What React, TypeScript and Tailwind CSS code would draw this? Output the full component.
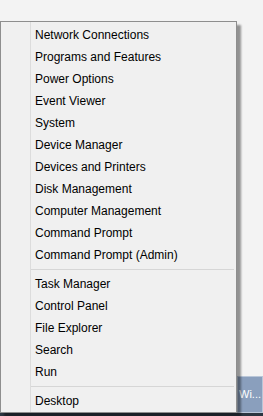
import React from 'react';

const GROUPS: string[][] = [
  [
    'Network Connections',
    'Programs and Features',
    'Power Options',
    'Event Viewer',
    'System',
    'Device Manager',
    'Devices and Printers',
    'Disk Management',
    'Computer Management',
    'Command Prompt',
    'Command Prompt (Admin)',
  ],
  ['Task Manager', 'Control Panel', 'File Explorer', 'Search', 'Run'],
  ['Desktop'],
];

export default function App() {
  return (
    <div className="relative w-[263px] h-[416px] overflow-hidden bg-[#f3f3f3] pt-[21px] font-['Segoe_UI','Liberation_Sans',sans-serif] text-[12px] text-black">
      {/* taskbar edge + window button peeking out under the menu */}
      <div className="absolute left-0 right-0 bottom-0 h-[3px] bg-[#2b3540]" />
      <div className="absolute left-[237px] top-[376px] w-[26px] h-[37px] border border-[#b9c6d8] bg-[#8a9fbd] pl-[1px] pt-[12px] text-[11px] leading-none text-white whitespace-nowrap">
        Wi...
      </div>

      {/* Win+X menu */}
      <div className="relative z-10 w-[237px] h-[392px] border border-[#8e8e8e] bg-[#f0f0f0] flex shadow-[4px_4px_2px_rgba(0,0,0,0.4)]">
        <div className="w-[29px] shrink-0" />
        <div className="flex-1 border-l border-[#dcdcdc] pt-[2px]">
          {GROUPS.map((group, gi) => (
            <div key={gi}>
              {gi > 0 && (
                <div className="h-[7px] flex items-center pr-[2px]">
                  <div className="h-px w-full bg-[#d6d6d6]" />
                </div>
              )}
              {group.map((item) => (
                <div key={item} className="h-[22px] flex items-center pl-[4px] whitespace-nowrap">
                  {item}
                </div>
              ))}
            </div>
          ))}
        </div>
      </div>
    </div>
  );
}
